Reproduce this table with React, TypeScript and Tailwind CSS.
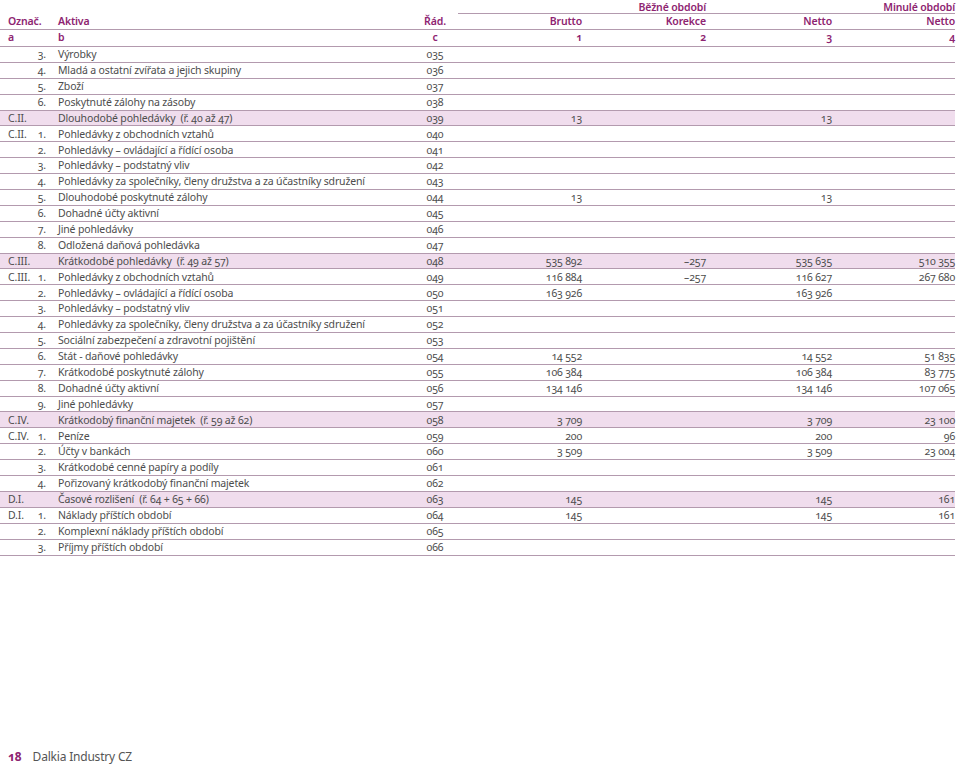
import React from 'react';

interface Row {
  code?: string;
  num?: string;
  label: string;
  rad: string;
  brutto?: string;
  korekce?: string;
  netto?: string;
  minule?: string;
  total?: boolean;
}

const rows: Row[] = [
  { num: '3.', label: 'Výrobky', rad: '035' },
  { num: '4.', label: 'Mladá a ostatní zvířata a jejich skupiny', rad: '036' },
  { num: '5.', label: 'Zboží', rad: '037' },
  { num: '6.', label: 'Poskytnuté zálohy na zásoby', rad: '038' },
  { code: 'C.II.', label: 'Dlouhodobé pohledávky  (ř. 40 až 47)', rad: '039', brutto: '13', netto: '13', total: true },
  { code: 'C.II.', num: '1.', label: 'Pohledávky z obchodních vztahů', rad: '040' },
  { num: '2.', label: 'Pohledávky – ovládající a řídící osoba', rad: '041' },
  { num: '3.', label: 'Pohledávky – podstatný vliv', rad: '042' },
  { num: '4.', label: 'Pohledávky za společníky, členy družstva a za účastníky sdružení', rad: '043' },
  { num: '5.', label: 'Dlouhodobé poskytnuté zálohy', rad: '044', brutto: '13', netto: '13' },
  { num: '6.', label: 'Dohadné účty aktivní', rad: '045' },
  { num: '7.', label: 'Jiné pohledávky', rad: '046' },
  { num: '8.', label: 'Odložená daňová pohledávka', rad: '047' },
  { code: 'C.III.', label: 'Krátkodobé pohledávky  (ř. 49 až 57)', rad: '048', brutto: '535 892', korekce: '–257', netto: '535 635', minule: '510 355', total: true },
  { code: 'C.III.', num: '1.', label: 'Pohledávky z obchodních vztahů', rad: '049', brutto: '116 884', korekce: '–257', netto: '116 627', minule: '267 680' },
  { num: '2.', label: 'Pohledávky – ovládající a řídící osoba', rad: '050', brutto: '163 926', netto: '163 926' },
  { num: '3.', label: 'Pohledávky – podstatný vliv', rad: '051' },
  { num: '4.', label: 'Pohledávky za společníky, členy družstva a za účastníky sdružení', rad: '052' },
  { num: '5.', label: 'Sociální zabezpečení a zdravotní pojištění', rad: '053' },
  { num: '6.', label: 'Stát - daňové pohledávky', rad: '054', brutto: '14 552', netto: '14 552', minule: '51 835' },
  { num: '7.', label: 'Krátkodobé poskytnuté zálohy', rad: '055', brutto: '106 384', netto: '106 384', minule: '83 775' },
  { num: '8.', label: 'Dohadné účty aktivní', rad: '056', brutto: '134 146', netto: '134 146', minule: '107 065' },
  { num: '9.', label: 'Jiné pohledávky', rad: '057' },
  { code: 'C.IV.', label: 'Krátkodobý finanční majetek  (ř. 59 až 62)', rad: '058', brutto: '3 709', netto: '3 709', minule: '23 100', total: true },
  { code: 'C.IV.', num: '1.', label: 'Peníze', rad: '059', brutto: '200', netto: '200', minule: '96' },
  { num: '2.', label: 'Účty v bankách', rad: '060', brutto: '3 509', netto: '3 509', minule: '23 004' },
  { num: '3.', label: 'Krátkodobé cenné papíry a podíly', rad: '061' },
  { num: '4.', label: 'Pořizovaný krátkodobý finanční majetek', rad: '062' },
  { code: 'D.I.', label: 'Časové rozlišení  (ř. 64 + 65 + 66)', rad: '063', brutto: '145', netto: '145', minule: '161', total: true },
  { code: 'D.I.', num: '1.', label: 'Náklady příštích období', rad: '064', brutto: '145', netto: '145', minule: '161' },
  { num: '2.', label: 'Komplexní náklady příštích období', rad: '065' },
  { num: '3.', label: 'Příjmy příštích období', rad: '066' },
];

const App: React.FC = () => {
  return (
    <div
      className="w-[960px] h-[767px] bg-white flex flex-col text-[10.5px] tracking-[-0.15px] text-[#4d4d4d] oldstyle-nums"
      style={{ fontFamily: '"Noto Sans", "Open Sans", sans-serif' }}
    >
      <div className="w-[955px]">
        {/* Period header */}
        <div className="flex h-[14px] items-end font-semibold text-[#8e2471] leading-[14px]">
          <div className="w-[458px]" />
          <div className="w-[248px] h-[14px] border-b border-[#b39aae] text-right">Běžné období</div>
          <div className="flex-1 h-[14px] border-b border-[#b39aae] text-right">Minulé období</div>
        </div>

        {/* Column header */}
        <div className="flex h-[16px] items-center border-b border-[#b39aae] font-semibold text-[#8e2471]">
          <div className="w-[46px] pl-2">Označ.</div>
          <div className="w-[369px] pl-[12px]">Aktiva</div>
          <div className="w-[40px] text-center">Řád.</div>
          <div className="w-[127px] text-right">Brutto</div>
          <div className="w-[124px] text-right">Korekce</div>
          <div className="w-[126px] text-right">Netto</div>
          <div className="flex-1 text-right">Netto</div>
        </div>

        {/* Column letters */}
        <div className="flex h-[17px] items-center border-b border-[#b39aae] font-semibold text-[#8e2471]">
          <div className="w-[46px] pl-2">a</div>
          <div className="w-[369px] pl-[12px]">b</div>
          <div className="w-[40px] text-center">c</div>
          <div className="w-[127px] text-right">1</div>
          <div className="w-[124px] text-right">2</div>
          <div className="w-[126px] text-right">3</div>
          <div className="flex-1 text-right">4</div>
        </div>

        {/* Data rows */}
        {rows.map((r, i) => (
          <div
            key={i}
            className={
              'flex h-[15.9px] items-center border-b border-[#b39aae] leading-none ' +
              (r.total ? 'bg-[#f0dded]' : '')
            }
          >
            <div className="w-[33px] pl-2">{r.code}</div>
            <div className="w-[13px] text-right">{r.num}</div>
            <div className="w-[369px] pl-[12px] whitespace-pre">{r.label}</div>
            <div className="w-[40px] text-center">{r.rad}</div>
            <div className="w-[127px] text-right">{r.brutto}</div>
            <div className="w-[124px] text-right">{r.korekce}</div>
            <div className="w-[126px] text-right">{r.netto}</div>
            <div className="flex-1 text-right">{r.minule}</div>
          </div>
        ))}
      </div>

      {/* Footer */}
      <div className="mt-auto mb-[1px] flex items-baseline gap-[11px] pl-2 text-[12px] tracking-[-0.2px]">
        <span className="font-bold text-[#8e2471]">18</span>
        <span className="text-[#555555]">Dalkia Industry CZ</span>
      </div>
    </div>
  );
};

export default App;
